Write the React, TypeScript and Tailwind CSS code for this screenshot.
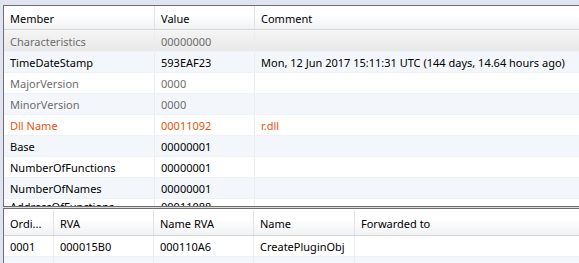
const topRows = [
  { member: "Characteristics", value: "00000000", comment: "", tone: "muted" },
  { member: "TimeDateStamp", value: "593EAF23", comment: "Mon, 12 Jun 2017 15:11:31 UTC (144 days, 14.64 hours ago)", tone: "normal" },
  { member: "MajorVersion", value: "0000", comment: "", tone: "muted" },
  { member: "MinorVersion", value: "0000", comment: "", tone: "muted" },
  { member: "Dll Name", value: "00011092", comment: "r.dll", tone: "accent" },
  { member: "Base", value: "00000001", comment: "", tone: "normal" },
  { member: "NumberOfFunctions", value: "00000001", comment: "", tone: "normal" },
  { member: "NumberOfNames", value: "00000001", comment: "", tone: "normal" },
  { member: "AddressOfFunctions", value: "00011088", comment: "", tone: "normal" },
];

const exports = [
  { ord: "0001", rva: "000015B0", nameRva: "000110A6", name: "CreatePluginObj", fwd: "" },
  { ord: "", rva: "", nameRva: "", name: "", fwd: "" },
];

const toneClass: Record<string, string> = {
  muted: "text-[#6d6d6d]",
  normal: "text-[#000000]",
  accent: "text-[#e8540c]",
};

function HeaderCell({ label, w, first }: { label: string; w: string; first?: boolean }) {
  return (
    <div
      className={`${w} shrink-0 h-full flex items-center pt-[2px] ${first ? "pl-[6px]" : "pl-[6px] border-l border-[#e3e3e3]"} whitespace-nowrap overflow-hidden`}
    >
      {label}
    </div>
  );
}

function BodyCell({ text, w, first, cut }: { text: string; w: string; first?: boolean; cut?: boolean }) {
  return (
    <div
      className={`${w} shrink-0 h-full flex ${cut ? "items-start pt-[2px]" : "items-center pt-px"} ${first ? "pl-[6px]" : "pl-[6px] border-l border-[#e9edf2]"} whitespace-nowrap overflow-hidden`}
    >
      {text}
    </div>
  );
}

export default function App() {
  return (
    <div
      className="w-[579px] h-[263px] overflow-hidden bg-[#dfe4f0] flex flex-col pt-[5px] pl-[3px] text-[11px] leading-none"
      style={{ fontFamily: '"Noto Sans", "Open Sans", sans-serif' }}
    >
      {/* top pane */}
      <div className="h-[202px] shrink-0 bg-white border-t border-l border-[#6f6f6f] border-b overflow-hidden flex flex-col">
        <div className="h-[24px] shrink-0 flex bg-gradient-to-b from-white from-40% to-[#f1f2f4] border-b border-[#d5d5d5] text-black">
          <HeaderCell label="Member" w="w-[150px]" first />
          <HeaderCell label="Value" w="w-[100px]" />
          <HeaderCell label="Comment" w="w-[330px]" />
        </div>
        <div className="h-px bg-[#f7f7f7] shrink-0" />
        {topRows.map((r, i) => (
          <div
            key={i}
            className={`h-[21px] shrink-0 flex border-b border-[#eef1f5] ${
              i === 0
                ? "bg-gradient-to-b from-[#f4f4f4] to-[#e9e9e9]"
                : i % 2 === 1
                ? "bg-[#f3f7fb]"
                : "bg-white"
            } ${toneClass[r.tone]}`}
          >
            <BodyCell text={r.member} w="w-[150px]" first cut={i === topRows.length - 1} />
            <BodyCell text={r.value} w="w-[100px]" cut={i === topRows.length - 1} />
            <BodyCell text={r.comment} w="w-[330px]" cut={i === topRows.length - 1} />
          </div>
        ))}
      </div>
      <div className="h-px shrink-0 bg-[#dcdcdc]" />
      {/* bottom pane */}
      <div className="flex-1 bg-white border-t border-l border-[#6f6f6f] overflow-hidden flex flex-col">
        <div className="h-[27px] shrink-0 flex bg-gradient-to-b from-white from-40% to-[#f1f2f4] border-b border-[#d5d5d5] text-black pt-px">
          <HeaderCell label="Ordi..." w="w-[49px]" first />
          <HeaderCell label="RVA" w="w-[100px]" />
          <HeaderCell label="Name RVA" w="w-[100px]" />
          <HeaderCell label="Name" w="w-[101px]" />
          <HeaderCell label="Forwarded to" w="w-[230px]" />
        </div>
        {exports.map((r, i) => (
          <div
            key={i}
            className={`h-[21px] shrink-0 flex border-b border-[#eef1f5] ${i % 2 === 1 ? "bg-[#f3f7fb]" : "bg-white"} text-black`}
          >
            <BodyCell text={r.ord} w="w-[49px]" first />
            <BodyCell text={r.rva} w="w-[100px]" />
            <BodyCell text={r.nameRva} w="w-[100px]" />
            <BodyCell text={r.name} w="w-[101px]" />
            <BodyCell text={r.fwd} w="w-[230px]" />
          </div>
        ))}
      </div>
    </div>
  );
}
